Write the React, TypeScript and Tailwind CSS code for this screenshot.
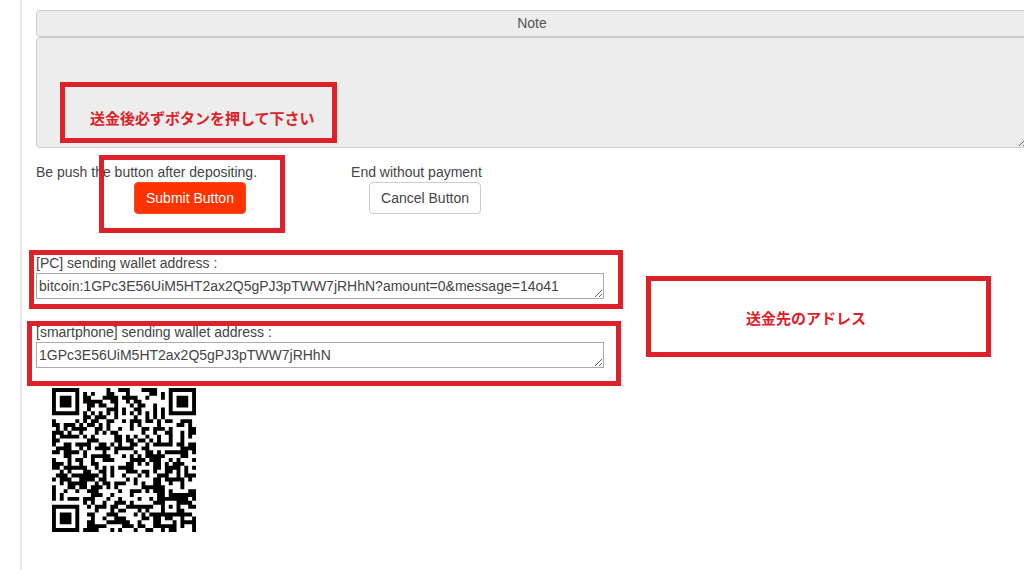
import React from "react";

const ADDRESS = "1GPc3E56UiM5HT2ax2Q5gPJ3pTWW7jRHhN";
const PAYMENT = `bitcoin:${ADDRESS}?amount=0&message=14o41`;

// QR code, version 5, error correction level M: two blocks of 43 data and 24 check bytes.
const SIZE = 37;
const DATA_BYTES = 86;
const CHECK_BYTES = 24;
const FORMAT = 5;
const masked = (x: number, y: number) => ((x * y) % 2) + ((x * y) % 3) === 0;

function gfMul(a: number, b: number) {
  let z = 0;
  for (let i = 7; i >= 0; i--) {
    z = (z << 1) ^ ((z >>> 7) * 0x11d);
    z ^= ((b >>> i) & 1) * a;
  }
  return z;
}

function checkBytes(data: number[]) {
  const div: number[] = new Array(CHECK_BYTES).fill(0);
  div[CHECK_BYTES - 1] = 1;
  let root = 1;
  for (let i = 0; i < CHECK_BYTES; i++) {
    for (let j = 0; j < CHECK_BYTES; j++) {
      div[j] = gfMul(div[j], root);
      if (j + 1 < CHECK_BYTES) div[j] ^= div[j + 1];
    }
    root = gfMul(root, 2);
  }
  const rem: number[] = new Array(CHECK_BYTES).fill(0);
  for (const b of data) {
    const factor = b ^ (rem.shift() ?? 0);
    rem.push(0);
    div.forEach((c, i) => (rem[i] ^= gfMul(c, factor)));
  }
  return rem;
}

function codewords(text: string) {
  const bits: number[] = [];
  const put = (v: number, n: number) => {
    for (let i = n - 1; i >= 0; i--) bits.push((v >>> i) & 1);
  };
  put(4, 4);
  put(text.length, 8);
  for (const c of text) put(c.charCodeAt(0), 8);
  put(0, 4);
  const data: number[] = [];
  for (let i = 0; i < bits.length; i += 8) data.push(parseInt(bits.slice(i, i + 8).join(""), 2));
  for (let pad = 0xec; data.length < DATA_BYTES; pad ^= 0xec ^ 0x11) data.push(pad);
  const blocks = [data.slice(0, DATA_BYTES / 2), data.slice(DATA_BYTES / 2)];
  const checks = blocks.map(checkBytes);
  return [
    ...blocks[0].flatMap((b, i) => [b, blocks[1][i]]),
    ...checks[0].flatMap((b, i) => [b, checks[1][i]]),
  ];
}

function qrGrid(text: string): boolean[][] {
  const all = codewords(text);
  const grid = Array.from({ length: SIZE }, () => new Array<boolean>(SIZE).fill(false));
  const fixed = Array.from({ length: SIZE }, () => new Array<boolean>(SIZE).fill(false));
  const set = (x: number, y: number, dark: boolean) => {
    if (x < 0 || y < 0 || x >= SIZE || y >= SIZE) return;
    grid[y][x] = dark;
    fixed[y][x] = true;
  };

  for (let i = 0; i < SIZE; i++) {
    set(6, i, i % 2 === 0);
    set(i, 6, i % 2 === 0);
  }
  for (const [cx, cy] of [[3, 3], [SIZE - 4, 3], [3, SIZE - 4]])
    for (let dy = -4; dy <= 4; dy++)
      for (let dx = -4; dx <= 4; dx++) {
        const d = Math.max(Math.abs(dx), Math.abs(dy));
        set(cx + dx, cy + dy, d !== 2 && d !== 4);
      }
  for (let dy = -2; dy <= 2; dy++)
    for (let dx = -2; dx <= 2; dx++)
      set(30 + dx, 30 + dy, Math.max(Math.abs(dx), Math.abs(dy)) !== 1);

  let rem = FORMAT;
  for (let i = 0; i < 10; i++) rem = (rem << 1) ^ ((rem >>> 9) * 0x537);
  const format = ((FORMAT << 10) | rem) ^ 0x5412;
  const bit = (i: number) => ((format >>> i) & 1) === 1;
  for (let i = 0; i <= 5; i++) set(8, i, bit(i));
  set(8, 7, bit(6));
  set(8, 8, bit(7));
  set(7, 8, bit(8));
  for (let i = 9; i < 15; i++) set(14 - i, 8, bit(i));
  for (let i = 0; i < 8; i++) set(SIZE - 1 - i, 8, bit(i));
  for (let i = 8; i < 15; i++) set(8, SIZE - 15 + i, bit(i));
  set(8, SIZE - 8, true);

  let n = 0;
  for (let right = SIZE - 1; right >= 1; right -= 2) {
    if (right === 6) right = 5;
    for (let v = 0; v < SIZE; v++)
      for (let j = 0; j < 2; j++) {
        const x = right - j;
        const y = ((right + 1) & 2) === 0 ? SIZE - 1 - v : v;
        if (fixed[y][x]) continue;
        const b = n < all.length * 8 ? (all[n >>> 3] >>> (7 - (n & 7))) & 1 : 0;
        grid[y][x] = (b === 1) !== masked(x, y);
        n++;
      }
  }
  return grid;
}

const QR_PATH = qrGrid(PAYMENT)
  .map((row, y) => row.map((on, x) => (on ? `M${x} ${y}h1v1h-1z` : "")).join(""))
  .join("");

function QrCode() {
  return (
    <svg viewBox="0 0 37 37" className="size-36" role="img" aria-label="Wallet address QR code">
      <path d={QR_PATH} fill="#000" />
    </svg>
  );
}

function Mark({ className, children }: { className: string; children?: React.ReactNode }) {
  return (
    <div
      className={`pointer-events-none absolute z-10 border-5 border-[#dc2129] text-[15px] leading-5 font-bold text-[#dc2129] ${className}`}
    >
      {children}
    </div>
  );
}

function AddressField({ id, label, value }: { id: string; label: string; value: string }) {
  return (
    <>
      <label htmlFor={id} className="block">
        {label}
      </label>
      <textarea
        id={id}
        readOnly
        rows={1}
        defaultValue={value}
        className="block h-[26px] w-full overflow-hidden border border-[#aaa] bg-white p-0.5"
      />
    </>
  );
}

export default function App() {
  return (
    <div className="min-h-screen overflow-hidden bg-white pl-5 font-['Liberation_Sans','Noto_Sans_CJK_JP',sans-serif] text-sm leading-5 text-[#444]">
      <main className="min-h-screen border-l-2 border-[#e8e8e8] pt-2.5 pl-3.5">
        <section className="relative -mr-1">
          <label
            htmlFor="note"
            className="block rounded border border-[#ccc] bg-[#ededed] pt-[2px] pb-[3px] text-center text-[#555]"
          >
            Note
          </label>
          <textarea
            id="note"
            readOnly
            className="block h-[111px] w-full rounded border border-[#ccc] bg-[#ededed]"
          />
          <Mark className="top-18 left-6 h-[61px] w-[277px] pt-[22px] pl-[25px]">
            送金後必ずボタンを押して下さい
          </Mark>
        </section>

        <section className="mt-3.5 flex gap-[94px]">
          <div className="relative">
            <p>Be push the button after depositing.</p>
            <button
              type="button"
              className="ml-[98px] block rounded border border-[#e8501f] bg-[#ff3300] px-[11px] py-[5px] text-white"
            >
              Submit Button
            </button>
            <Mark className="-top-[7px] left-[63px] h-[78px] w-[186px]" />
          </div>
          <div>
            <p>End without payment</p>
            <button
              type="button"
              className="ml-[18px] block rounded border border-[#ccc] bg-white px-[11px] py-[5px]"
            >
              Cancel Button
            </button>
          </div>
        </section>

        <div className="relative mt-[39px] w-[568px]">
          <AddressField id="pc" label="[PC] sending wallet address :" value={PAYMENT} />
          <Mark className="-top-[3px] -left-[7px] h-[59px] w-[594px]" />
          <Mark className="top-[23px] left-[610px] h-[81px] w-[345px] pt-[28px] pl-[95px]">
            送金先のアドレス
          </Mark>
        </div>

        <div className="relative mt-[23px] w-[568px]">
          <AddressField id="phone" label="[smartphone] sending wallet address :" value={ADDRESS} />
          <Mark className="-top-px -left-[9px] h-[65px] w-[594px]" />
        </div>

        <div className="mt-5 ml-4">
          <QrCode />
        </div>
      </main>
    </div>
  );
}
